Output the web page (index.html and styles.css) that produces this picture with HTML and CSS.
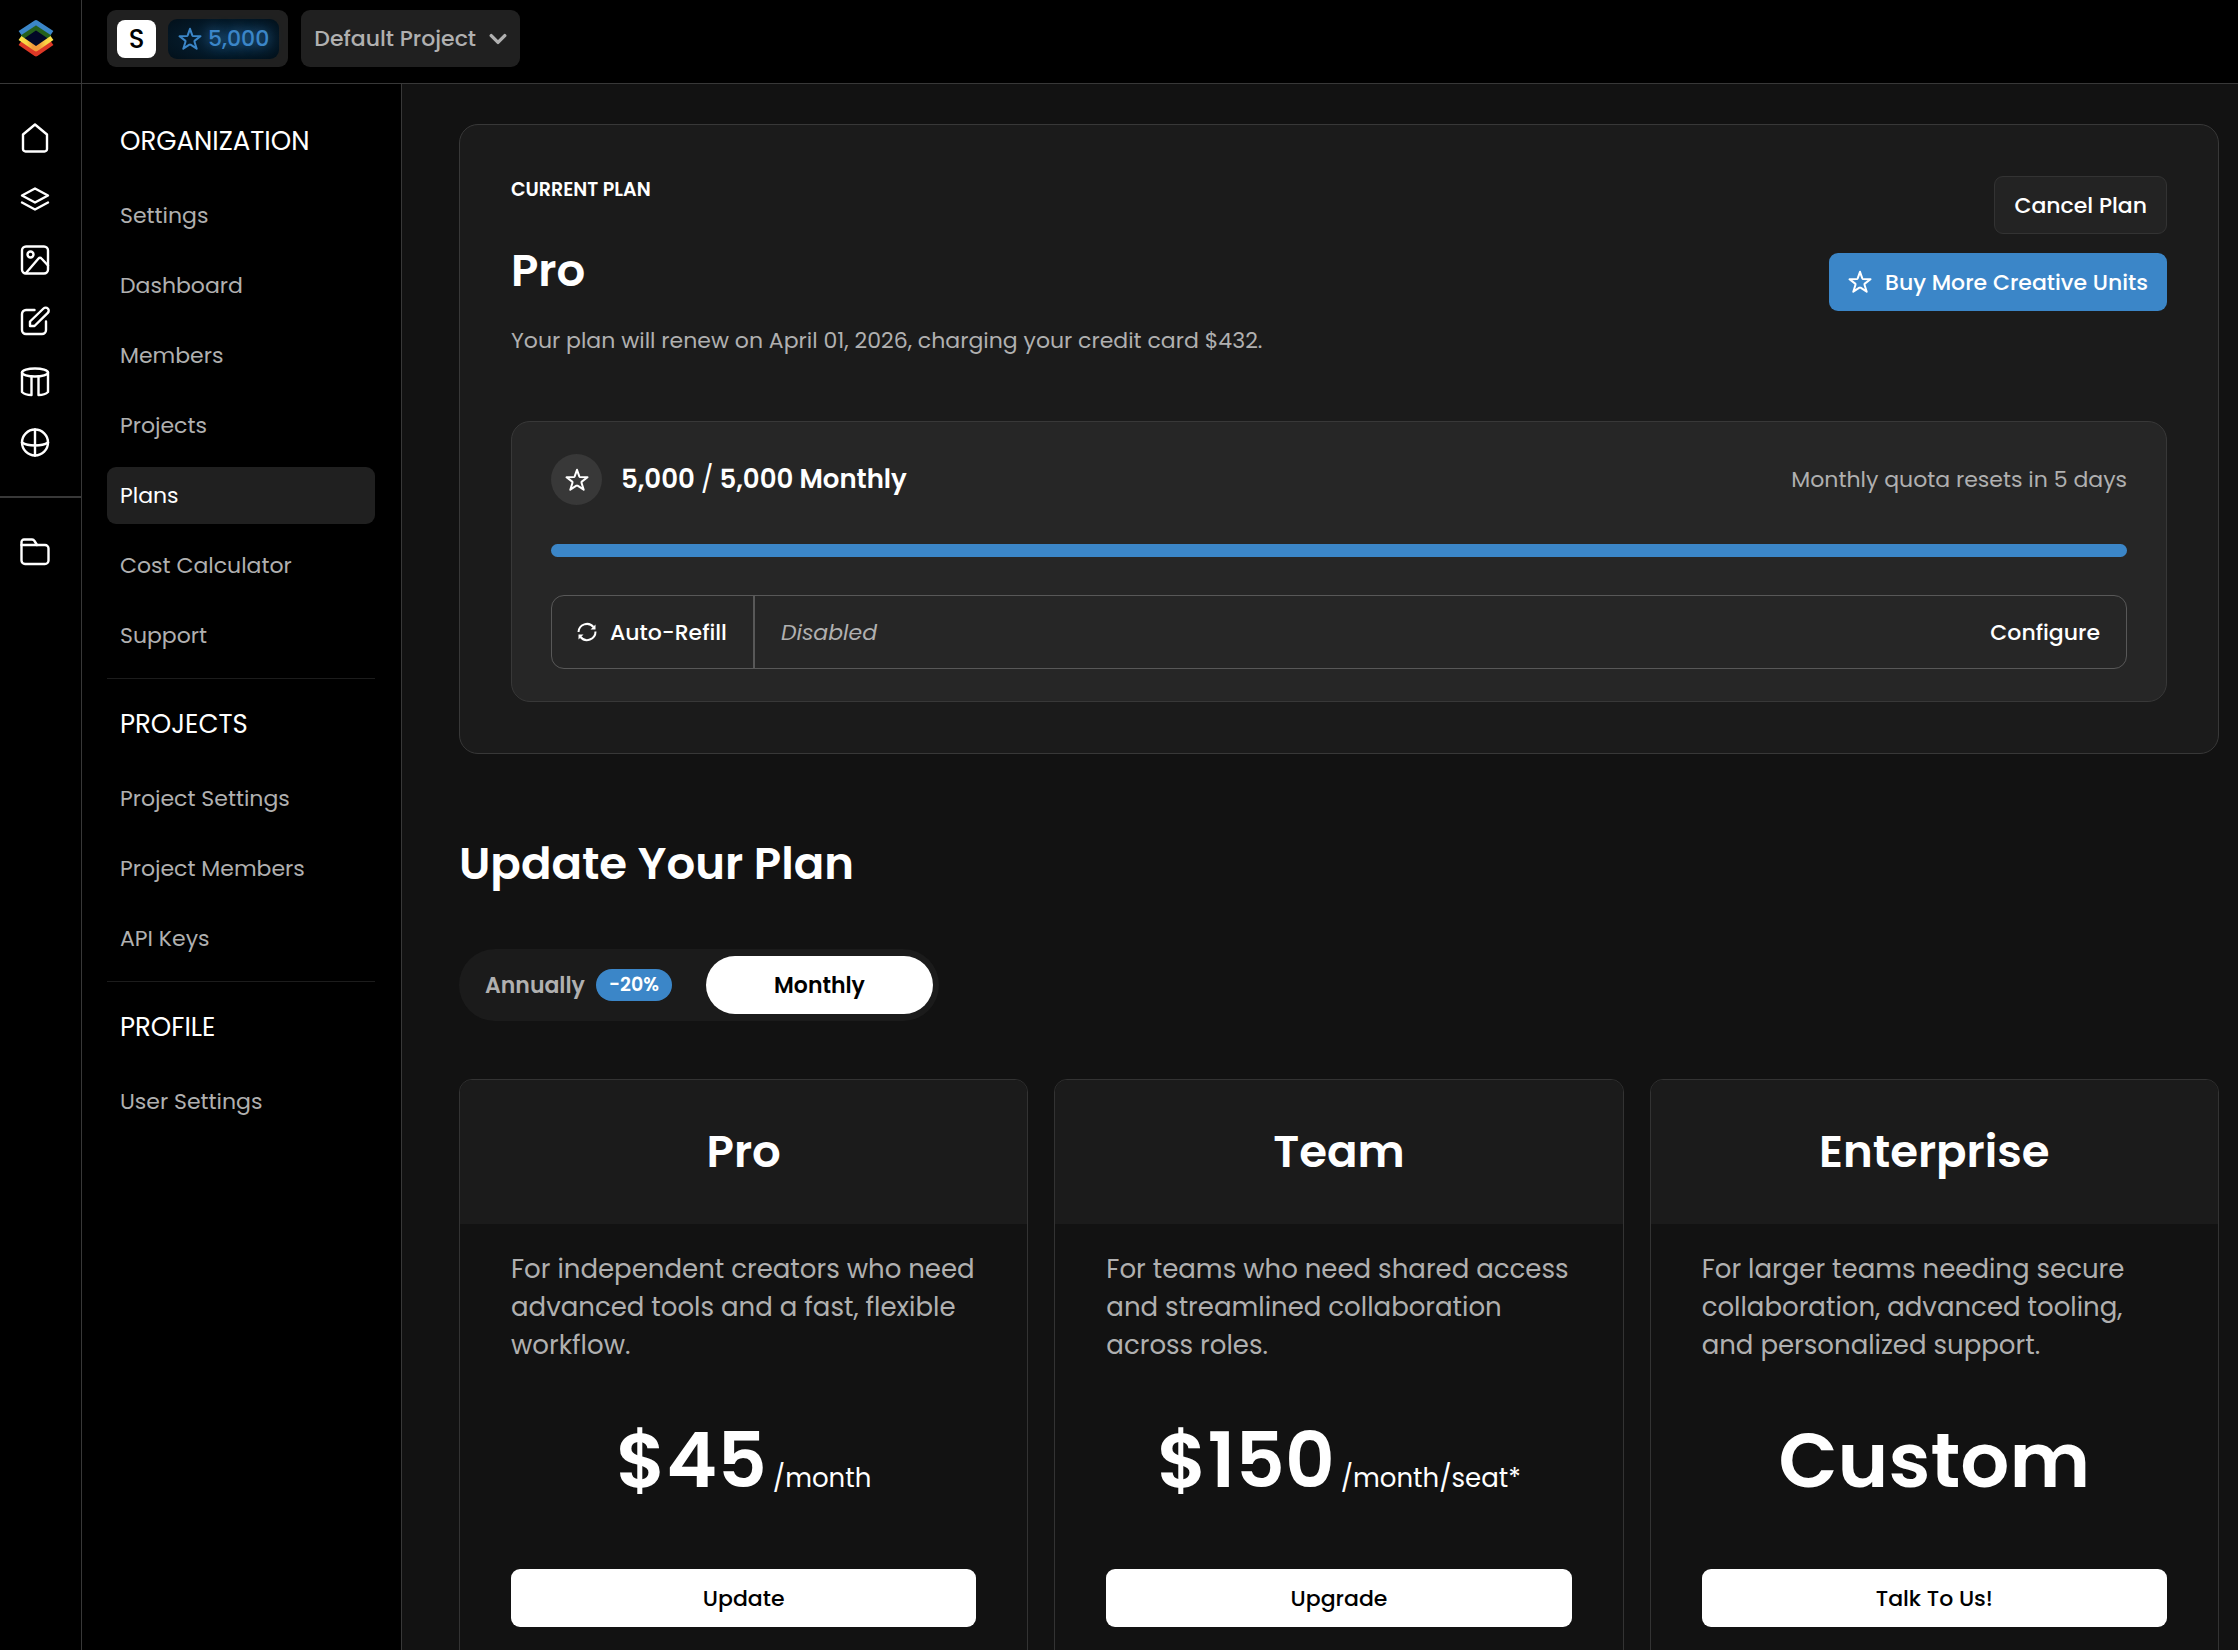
FILE: index.html
```html
<!DOCTYPE html>
<html lang="en">
<head>
    <meta charset="UTF-8">
    <meta name="viewport" content="width=device-width, initial-scale=1.0">
    <title>Plans</title>
    <link rel="stylesheet" href="styles.css">
</head>
<body>
    <svg class="sprite" aria-hidden="true">
        <symbol id="star" viewBox="0 0 24 24">
            <path d="M12 1.800l2.300 6.600a1 1 0 0 0 .9.600l7.300.3-5.700 4.300a1 1 0 0 0-.3 1.100l2.200 7-6.100-4a1 1 0 0 0-1.200 0l-6.100 4 2.200-7a1 1 0 0 0-.3-1.100L1.500 9.300l7.300-.3a1 1 0 0 0 .9-.6z"/>
        </symbol>
    </svg>

    <div class="app">
        <nav class="rail" aria-label="Main">
            <a class="logo" href="#" aria-label="Home page">
                <svg width="36" height="38" viewBox="0 0 36 38" fill="none" stroke-width="5" stroke-linejoin="round">
                    <defs>
                        <linearGradient id="band">
                            <stop offset="0" stop-color="#fbe34a"/>
                            <stop offset="0.2" stop-color="#f9d443"/>
                            <stop offset="0.4" stop-color="#f2993b"/>
                            <stop offset="0.6" stop-color="#f2993b"/>
                            <stop offset="0.8" stop-color="#f9d443"/>
                            <stop offset="1" stop-color="#fbe34a"/>
                        </linearGradient>
                    </defs>
                    <path fill="#020726" d="M6 19l12-9 12 9-12 9z"/>
                    <path stroke="#255f1b" d="M4 18L18 8.500 32 18"/>
                    <path stroke="#dd3826" d="M2 24l16 11 16-11"/>
                    <path stroke="url(#band)" d="M2 19l16 11 16-11"/>
                    <path stroke="#3b86c8" d="M2 14L18 3.500 34 14"/>
                </svg>
            </a>
            <div class="rail-links">
                <a href="#" aria-label="Home"><svg viewBox="0 0 30 30"><path d="M15 1.500L3 11.500V26a2.500 2.500 0 0 0 2.500 2.500h19A2.500 2.500 0 0 0 27 26V11.500z"/></svg></a>
                <a href="#" aria-label="Models"><svg viewBox="0 0 30 30"><path d="M15 4.500l13 7-13 7-13-7z"/><path d="M2 18.500l13 7 13-7"/></svg></a>
                <a href="#" aria-label="Images"><svg viewBox="0 0 30 30"><rect x="2" y="1.500" width="26" height="27" rx="4"/><circle cx="10.500" cy="9.500" r="3"/><path d="M6 28L18.500 13.500a2 2 0 0 1 3 0l6.500 7"/></svg></a>
                <a href="#" aria-label="Edit"><svg viewBox="0 0 30 30"><path d="M14.500 4H6a4 4 0 0 0-4 4v16a4 4 0 0 0 4 4h16a4 4 0 0 0 4-4v-8.500"/><path d="M10 20v-4.500L23.500 2.500a3 3 0 0 1 4.300 4.300L14.500 20z"/></svg></a>
                <a href="#" aria-label="Textures"><svg viewBox="0 0 30 30"><ellipse cx="15" cy="5.500" rx="13" ry="4"/><path d="M2 5.500V25c2 2 5.500 3 9.500 3V9.500"/><path d="M28 5.500V25c-2 2-5.500 3-9.500 3V9.500"/></svg></a>
                <a href="#" aria-label="Skybox"><svg viewBox="0 0 30 30"><circle cx="15" cy="14.500" r="13"/><path d="M15 1.500v26M2 14.500c6 4 20 4 26 0"/></svg></a>
            </div>
            <div class="rail-links rail-files">
                <a href="#" aria-label="Files"><svg viewBox="0 0 30 30"><path d="M1.500 8.500V5A2.500 2.500 0 0 1 4 2.500h8a3 3 0 0 1 2.500 1.500L17 8h8a3.500 3.500 0 0 1 3.500 3.500v12A3.500 3.500 0 0 1 25 27H5a3.500 3.500 0 0 1-3.500-3.500z"/><path d="M1.500 8H17"/></svg></a>
            </div>
        </nav>

        <header class="topbar">
            <button class="top-pill org-pill" type="button">
                <span class="org-letter">S</span>
                <span class="credits"><svg class="icon"><use href="#star"/></svg>5,000</span>
            </button>
            <button class="top-pill project-pill" type="button">
                Default Project
                <svg class="chevron" viewBox="0 0 16 16"><path d="M2 5l6 6 6-6"/></svg>
            </button>
        </header>

        <aside class="sidebar">
            <section>
                <h2>ORGANIZATION</h2>
                <a href="#">Settings</a>
                <a href="#">Dashboard</a>
                <a href="#">Members</a>
                <a href="#">Projects</a>
                <a href="#" class="active" aria-current="page">Plans</a>
                <a href="#">Cost Calculator</a>
                <a href="#">Support</a>
            </section>
            <section>
                <h2>PROJECTS</h2>
                <a href="#">Project Settings</a>
                <a href="#">Project Members</a>
                <a href="#">API Keys</a>
            </section>
            <section>
                <h2>PROFILE</h2>
                <a href="#">User Settings</a>
            </section>
        </aside>

        <main class="content">
            <section class="current-plan">
                <div class="plan-top">
                    <div>
                        <h3>CURRENT PLAN</h3>
                        <h1>Pro</h1>
                        <p>Your plan will renew on April 01, 2026, charging your credit card $432.</p>
                    </div>
                    <div class="plan-actions">
                        <button class="btn btn-dark" type="button">Cancel Plan</button>
                        <button class="btn btn-blue" type="button"><svg class="icon"><use href="#star"/></svg>Buy More Creative Units</button>
                    </div>
                </div>
                <div class="quota">
                    <div class="quota-head">
                        <span class="quota-icon"><svg class="icon"><use href="#star"/></svg></span>
                        <strong>5,000 <span>/</span> 5,000 Monthly</strong>
                        <span class="quota-reset">Monthly quota resets in 5 days</span>
                    </div>
                    <div class="bar"><div class="bar-fill" style="width: 100%"></div></div>
                    <div class="refill">
                        <div class="refill-label">
                            <svg class="refresh" viewBox="0 0 20 20"><path d="M1.500 10a8.500 8.500 0 0 1 15-5M18.500 9.500a8.500 8.500 0 0 1-15 5.500"/><path class="fill" d="M18.500 2.500v5h-5zM1.500 17.500v-5h5z"/></svg>
                            Auto-Refill
                        </div>
                        <em>Disabled</em>
                        <button type="button">Configure</button>
                    </div>
                </div>
            </section>

            <h1 class="update-title">Update Your Plan</h1>

            <div class="billing">
                <button type="button">Annually <span class="discount">-20%</span></button>
                <button type="button" class="selected">Monthly</button>
            </div>

            <div class="plans">
                <article class="plan">
                    <h2>Pro</h2>
                    <div class="plan-body">
                        <p>For independent creators who need advanced tools and a fast, flexible workflow.</p>
                        <div class="price">$45 <small>/month</small></div>
                        <button class="btn btn-white" type="button">Update</button>
                    </div>
                </article>
                <article class="plan">
                    <h2>Team</h2>
                    <div class="plan-body">
                        <p>For teams who need shared access and streamlined collaboration across roles.</p>
                        <div class="price">$150 <small>/month/seat*</small></div>
                        <button class="btn btn-white" type="button">Upgrade</button>
                    </div>
                </article>
                <article class="plan">
                    <h2>Enterprise</h2>
                    <div class="plan-body">
                        <p>For larger teams needing secure collaboration, advanced tooling, and personalized support.</p>
                        <div class="price">Custom</div>
                        <button class="btn btn-white" type="button">Talk To Us!</button>
                    </div>
                </article>
            </div>
        </main>
    </div>
</body>
</html>
```
FILE: styles.css
```css
* {
    box-sizing: border-box;
}

body {
    margin: 0;
    background-color: #121212;
    color: #fff;
    font-family: Poppins, Inter, sans-serif;
    font-size: 22px;
    line-height: 33px;
}

h1, h2, h3, p {
    margin: 0;
}

a {
    color: inherit;
    text-decoration: none;
}

button {
    padding: 0;
    border: none;
    background: none;
    color: inherit;
    font: inherit;
    font-weight: 500;
    cursor: pointer;
}

svg {
    flex-shrink: 0;
}

.sprite {
    position: absolute;
    width: 0;
    height: 0;
}

.icon {
    width: 24px;
    height: 24px;
    fill: none;
    stroke: currentColor;
    stroke-width: 2;
    stroke-linejoin: round;
}

.app {
    display: grid;
    grid-template-columns: 82px 320px 1fr;
    grid-template-rows: 84px 1fr;
    height: 100vh;
}

/* icon rail */
.rail {
    grid-row: 1 / 3;
    background-color: #000;
    border-right: 1px solid #383838;
}

.logo {
    display: flex;
    height: 84px;
    padding: 19px 0 0 18px;
    border-bottom: 1px solid #383838;
}

.rail-links {
    display: flex;
    flex-direction: column;
    gap: 31px;
    padding: 39px 0 38px 20px;
}

.rail-links a {
    display: flex;
    width: 30px;
    height: 30px;
}

.rail-links svg {
    width: 30px;
    height: 30px;
    fill: none;
    stroke: #fff;
    stroke-width: 2.4;
    stroke-linecap: round;
    stroke-linejoin: round;
}

.rail-files {
    border-top: 2px solid #383838;
}

/* top bar */
.topbar {
    grid-column: 2 / 4;
    display: flex;
    align-items: flex-start;
    gap: 13px;
    padding: 10px 25px;
    background-color: #000;
    border-bottom: 1px solid #383838;
}

.top-pill {
    display: flex;
    align-items: center;
    height: 57px;
    background-color: #202020;
    border-radius: 9px;
}

.org-pill {
    gap: 12px;
    padding: 0 9px 0 10px;
}

.org-letter {
    width: 39px;
    height: 38px;
    line-height: 38px;
    background-color: #fff;
    border-radius: 8px;
    color: #000;
    font-size: 26px;
}

.credits {
    display: flex;
    align-items: center;
    gap: 6px;
    height: 40px;
    padding: 0 10px;
    background: radial-gradient(#072338, #02101a);
    border-radius: 9px;
    color: #3b86c8;
    text-shadow: 0 0 14px #3b86c8;
}

.project-pill {
    gap: 13px;
    padding: 0 13px;
    color: #b0b0b0;
}

.chevron {
    width: 18px;
    height: 18px;
    fill: none;
    stroke: currentColor;
    stroke-width: 3;
    stroke-linecap: round;
    stroke-linejoin: round;
}

/* settings menu */
.sidebar {
    padding: 25px 26px 25px 25px;
    background-color: #000;
    border-right: 1px solid #383838;
}

.sidebar section {
    display: flex;
    flex-direction: column;
    gap: 13px;
    padding-bottom: 14px;
    margin-bottom: 13px;
    border-bottom: 1px solid #1c1c1c;
}

.sidebar section:last-child {
    border-bottom: none;
}

.sidebar h2 {
    padding: 16px 13px 0;
    margin-bottom: 16px;
    font-size: 26px;
    font-weight: 400;
    line-height: 33px;
}

.sidebar a {
    padding: 12px 13px;
    border-radius: 9px;
    color: #b0b0b0;
}

.sidebar a.active {
    background-color: #202020;
    color: #fff;
}

/* main */
.content {
    padding: 40px 19px 40px 57px;
    overflow-y: auto;
    scrollbar-width: none;
}

.current-plan {
    padding: 51px;
    background-color: #1b1b1b;
    border: 1px solid #383838;
    border-radius: 19px;
}

.plan-top {
    display: flex;
    justify-content: space-between;
    margin-bottom: 64px;
}

.plan-top h3 {
    font-size: 19px;
    font-weight: 600;
    line-height: 28px;
}

.plan-top h1 {
    margin: 34px 0 20px;
}

h1, .plan h2 {
    font-size: 45px;
    font-weight: 600;
    line-height: 66px;
}

.plan-top p {
    color: #b0b0b0;
}

.plan-actions {
    display: flex;
    flex-direction: column;
    align-items: flex-end;
    gap: 19px;
}

.btn {
    display: flex;
    align-items: center;
    justify-content: center;
    gap: 13px;
    height: 58px;
    padding: 0 19px;
    border-radius: 9px;
}

.btn-dark {
    background-color: #232323;
    border: 1px solid #333;
}

.btn-blue {
    background-color: #3b86c8;
}

.btn-white {
    width: 100%;
    background-color: #fff;
    color: #000;
}

.quota {
    padding: 32px 39px;
    background-color: #262626;
    border: 1px solid #383838;
    border-radius: 19px;
}

.quota-head {
    display: flex;
    align-items: center;
    gap: 19px;
}

.quota-icon {
    display: flex;
    align-items: center;
    justify-content: center;
    width: 51px;
    height: 51px;
    background-color: #383838;
    border-radius: 50%;
}

.quota-head strong {
    font-size: 26px;
    font-weight: 600;
}

.quota-head strong span {
    font-weight: 400;
}

.quota-reset {
    margin-left: auto;
    color: #b0b0b0;
}

.bar {
    height: 13px;
    margin: 39px 0 38px;
    background-color: #383838;
    border-radius: 7px;
}

.bar-fill {
    height: 100%;
    background-color: #3b86c8;
    border-radius: 7px;
}

.refill {
    display: flex;
    align-items: center;
    height: 74px;
    padding-right: 26px;
    border: 1px solid #585858;
    border-radius: 13px;
}

.refill-label {
    display: flex;
    align-items: center;
    gap: 13px;
    height: 100%;
    padding: 0 26px 0 25px;
    border-right: 2px solid #585858;
    font-weight: 500;
}

.refresh {
    width: 20px;
    height: 20px;
    fill: none;
    stroke: #fff;
    stroke-width: 2;
}

.refresh .fill {
    fill: #fff;
    stroke: none;
}

.refill em {
    flex: 1;
    padding-left: 26px;
    color: #b0b0b0;
}

.update-title {
    margin: 77px 0 52px;
}

.billing {
    display: flex;
    width: fit-content;
    padding: 7px 6px;
    background-color: #1b1b1b;
    border-radius: 36px;
}

.billing button {
    display: flex;
    align-items: center;
    justify-content: center;
    gap: 11px;
    width: 227px;
    height: 58px;
    border-radius: 30px;
    color: #b0b0b0;
    font-weight: 600;
}

.billing .selected {
    margin-left: 14px;
    background-color: #fff;
    color: #000;
}

.discount {
    padding: 0 13px;
    background-color: #3b86c8;
    border-radius: 16px;
    color: #fff;
    font-size: 19px;
    line-height: 32px;
}

.plans {
    display: grid;
    grid-template-columns: repeat(3, 1fr);
    gap: 26px;
    margin-top: 58px;
}

.plan {
    border: 1px solid #333;
    border-radius: 13px;
    overflow: hidden;
}

.plan h2 {
    padding: 39px 0;
    background-color: #1b1b1b;
    text-align: center;
}

.plan-body {
    padding: 26px 51px 51px;
}

.plan-body p {
    color: #b0b0b0;
    font-size: 26px;
    line-height: 38px;
}

.price {
    display: flex;
    align-items: baseline;
    justify-content: center;
    gap: 6px;
    margin: 36px 0 49px;
    font-size: 77px;
    font-weight: 600;
    line-height: 120px;
    white-space: nowrap;
}

.price small {
    font-size: 26px;
    font-weight: 400;
    line-height: 38px;
}
```
